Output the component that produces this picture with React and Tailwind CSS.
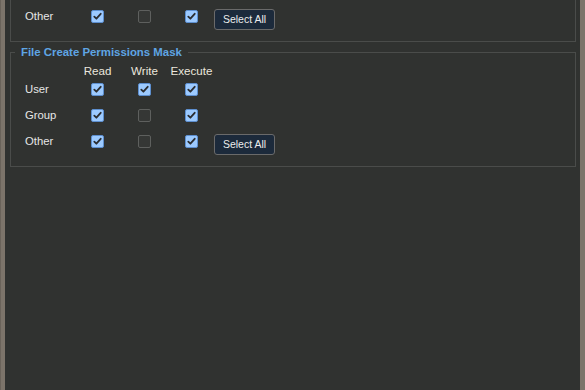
import React from "react";

function Box({ checked }) {
  if (checked) {
    return (
      <div className="w-[13px] h-[13px] rounded-[2px] bg-[#9ccaff] border border-[#5d8fcf] flex items-center justify-center">
        <svg width="11" height="11" viewBox="0 0 11 11">
          <path d="M2.3 5.6 L4.4 7.7 L8.7 2.8" fill="none" stroke="#2a2d31" strokeWidth="1.8" strokeLinecap="round" strokeLinejoin="round" />
        </svg>
      </div>
    );
  }
  return <div className="w-[13px] h-[13px] rounded-[2px] bg-[#353735] border border-[#5e605e]" />;
}

function Cell({ children }) {
  return <div className="w-[47px] flex justify-center">{children}</div>;
}

function Row({ label, vals, button }) {
  return (
    <div className="flex items-start h-[26px] pt-[6px]">
      <div className="w-[63px] pl-[14px] text-[11.3px] leading-[13px] text-[#e6e6e6] whitespace-nowrap">{label}</div>
      {vals.map((v, i) => (
        <Cell key={i}>
          <Box checked={v} />
        </Cell>
      ))}
      {button && (
        <button className="ml-[-1px] w-[61px] h-[21px] -mt-[1px] rounded-[3px] border border-[#6a6a6a] bg-[#1c2a3b] text-[10.5px] leading-[19px] text-[#ececec] text-center">
          Select All
        </button>
      )}
    </div>
  );
}

function Mask({ title, rows, className }) {
  return (
    <fieldset className={"border border-[#4a4c4a] pb-[11px] " + className}>
      <legend className="ml-[4px] px-[6px] text-[11.4px] leading-[14px] font-bold text-[#5fa5e4]">{title}</legend>
      <div className="flex items-end h-[18px]">
        <div className="w-[63px]" />
        {["Read", "Write", "Execute"].map((h) => (
          <div key={h} className="w-[47px] text-center text-[11.6px] leading-[13px] text-[#ebe7dd] whitespace-nowrap">{h}</div>
        ))}
      </div>
      {rows.map((r) => (
        <Row key={r.label} label={r.label} vals={r.vals} button={r.button} />
      ))}
    </fieldset>
  );
}

export default function App() {
  const fileRows = [
    { label: "User", vals: [true, true, true] },
    { label: "Group", vals: [true, false, true] },
    { label: "Other", vals: [true, false, true], button: true },
  ];
  return (
    <div className="w-[585px] h-[390px] overflow-hidden bg-[#7c746a] flex font-['Liberation_Sans',Arial,sans-serif]">
      <div className="w-[1px] bg-[#6a635a]" />
      <div className="ml-[4px] mr-[5px] flex-1 bg-[#303230] overflow-hidden pl-[5px] pr-[4px]">
        <div className="border-x border-b border-[#4a4c4a] pt-[4px] pb-[11px]">
          <Row label="Other" vals={[true, false, true]} button />
        </div>
        <Mask title="File Create Permissions Mask" rows={fileRows} className="mt-[3px]" />
      </div>
    </div>
  );
}
